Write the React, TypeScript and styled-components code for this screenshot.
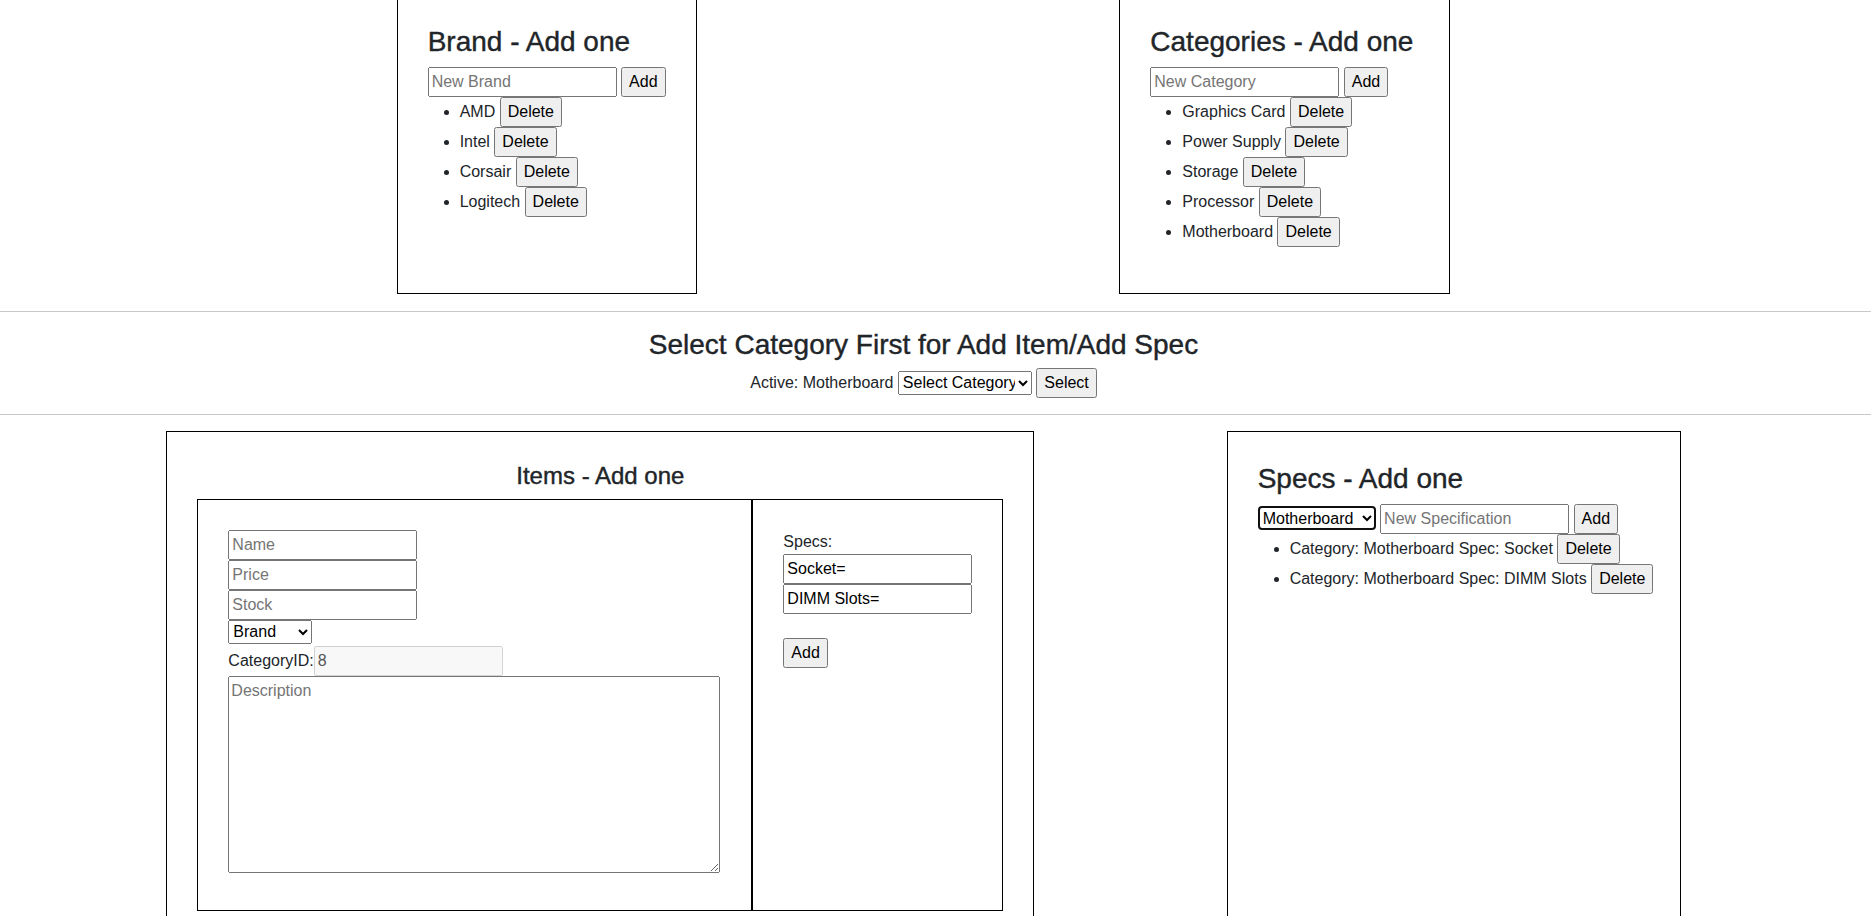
import styled, { createGlobalStyle } from "styled-components";

const brands = ["AMD", "Intel", "Corsair", "Logitech"];
const categories = ["Graphics Card", "Power Supply", "Storage", "Processor", "Motherboard"];
const specs = ["Socket", "DIMM Slots"];

const GlobalStyle = createGlobalStyle`
  *, *::before, *::after {
    box-sizing: border-box;
  }
  html, body {
    margin: 0;
  }
  body {
    font-family: "Liberation Sans", Arial, sans-serif;
    font-size: 16px;
    line-height: 1.5;
    color: #212529;
    background: #fff;
  }
  input, button, select, textarea {
    font-family: inherit;
    font-size: inherit;
    line-height: inherit;
    margin: 0;
  }
`;

const App = () => {
  return (
    <Viewport>
      <GlobalStyle />
      <Page>
        <PanelRow $offsetTop={-6}>
          <Panel $width={300}>
            <Title>Brand - Add one</Title>
            <div>
              <TextInput placeholder="New Brand" /> <button>Add</button>
            </div>
            <List>
              {brands.map((brand) => (
                <ListItem key={brand}>
                  {brand} <button>Delete</button>
                </ListItem>
              ))}
            </List>
          </Panel>
          <Panel $width={331}>
            <Title>Categories - Add one</Title>
            <div>
              <TextInput placeholder="New Category" /> <button>Add</button>
            </div>
            <List>
              {categories.map((category) => (
                <ListItem key={category}>
                  {category} <button>Delete</button>
                </ListItem>
              ))}
            </List>
          </Panel>
        </PanelRow>

        <Divider $top={17} />

        <Center>
          <CenterTitle>Select Category First for Add Item/Add Spec</CenterTitle>
          <div>
            Active: Motherboard{" "}
            <Select $width={134} defaultValue="">
              <option value="">Select Category</option>
              {categories.map((category) => (
                <option key={category}>{category}</option>
              ))}
            </Select>{" "}
            <button>Select</button>
          </div>
        </Center>

        <Divider />

        <PanelRow>
          <Panel $width={868}>
            <SubTitle>Items - Add one</SubTitle>
            <ItemGrid>
              <Cell $width={555}>
                <TextInput placeholder="Name" />
                <br />
                <TextInput placeholder="Price" />
                <br />
                <TextInput placeholder="Stock" />
                <br />
                <BrandSelect $width={84} defaultValue="">
                  <option value="">Brand</option>
                  {brands.map((brand) => (
                    <option key={brand}>{brand}</option>
                  ))}
                </BrandSelect>
                <br />
                CategoryID:<TextInput value="8" disabled readOnly />
                <br />
                <Description placeholder="Description" />
              </Cell>
              <Cell $width={251}>
                Specs:
                <br />
                {specs.map((spec) => (
                  <span key={spec}>
                    <TextInput defaultValue={`${spec}=`} />
                    <br />
                  </span>
                ))}
                <br />
                <button>Add</button>
              </Cell>
            </ItemGrid>
          </Panel>
          <Panel $width={454}>
            <Title>Specs - Add one</Title>
            <div>
              <Select $width={118} $focused defaultValue="Motherboard">
                {categories.map((category) => (
                  <option key={category}>{category}</option>
                ))}
              </Select>{" "}
              <TextInput placeholder="New Specification" /> <button>Add</button>
            </div>
            <List>
              {specs.map((spec) => (
                <ListItem key={spec}>
                  Category: Motherboard Spec: {spec} <button>Delete</button>
                </ListItem>
              ))}
            </List>
          </Panel>
        </PanelRow>
      </Page>
    </Viewport>
  );
};

const Viewport = styled.div`
  height: 100vh;
  overflow: hidden;
`;

const Page = styled.main`
  margin: 0 -2px 0 -26px;
`;

const PanelRow = styled.div<{ $offsetTop?: number }>`
  display: flex;
  justify-content: space-evenly;
  align-items: stretch;
  margin-top: ${(p) => p.$offsetTop ?? 0}px;
`;

const Panel = styled.section<{ $width: number }>`
  flex: none;
  width: ${(p) => p.$width}px;
  border: 1px solid #000;
  padding: 30px;
`;

const Title = styled.h3`
  margin: 0 0 8px;
  font-size: 28px;
  font-weight: 500;
  line-height: 1.2;
  -webkit-text-stroke: 0.4px currentColor;
`;

const SubTitle = styled.h4`
  margin: 0 0 8px;
  font-size: 24px;
  font-weight: 500;
  line-height: 1.2;
  text-align: center;
  -webkit-text-stroke: 0.4px currentColor;
`;

const TextInput = styled.input`
  width: 189px;
`;

const List = styled.ul`
  margin: 0 0 16px;
  padding-left: 32px;
`;

const ListItem = styled.li`
  white-space: nowrap;
`;

const Divider = styled.hr<{ $top?: number }>`
  margin: ${(p) => p.$top ?? 16}px 0 16px;
  border: 0;
  border-top: 1px solid #212529;
  opacity: 0.25;
`;

const Center = styled.section`
  text-align: center;
`;

const CenterTitle = styled(Title)`
  margin-bottom: 7px;
`;

const Select = styled.select<{ $width: number; $focused?: boolean }>`
  width: ${(p) => p.$width}px;
  height: 24px;
  outline: ${(p) => (p.$focused ? "-webkit-focus-ring-color auto 1px" : "none")};
`;

const BrandSelect = styled(Select)`
  margin-bottom: 2px;
`;

const ItemGrid = styled.div`
  display: flex;
`;

const Cell = styled.div<{ $width: number }>`
  flex: none;
  width: ${(p) => p.$width}px;
  border: 1px solid #000;
  padding: 30px;
`;

const Description = styled.textarea`
  width: 492px;
  height: 197px;
`;

export default App;
